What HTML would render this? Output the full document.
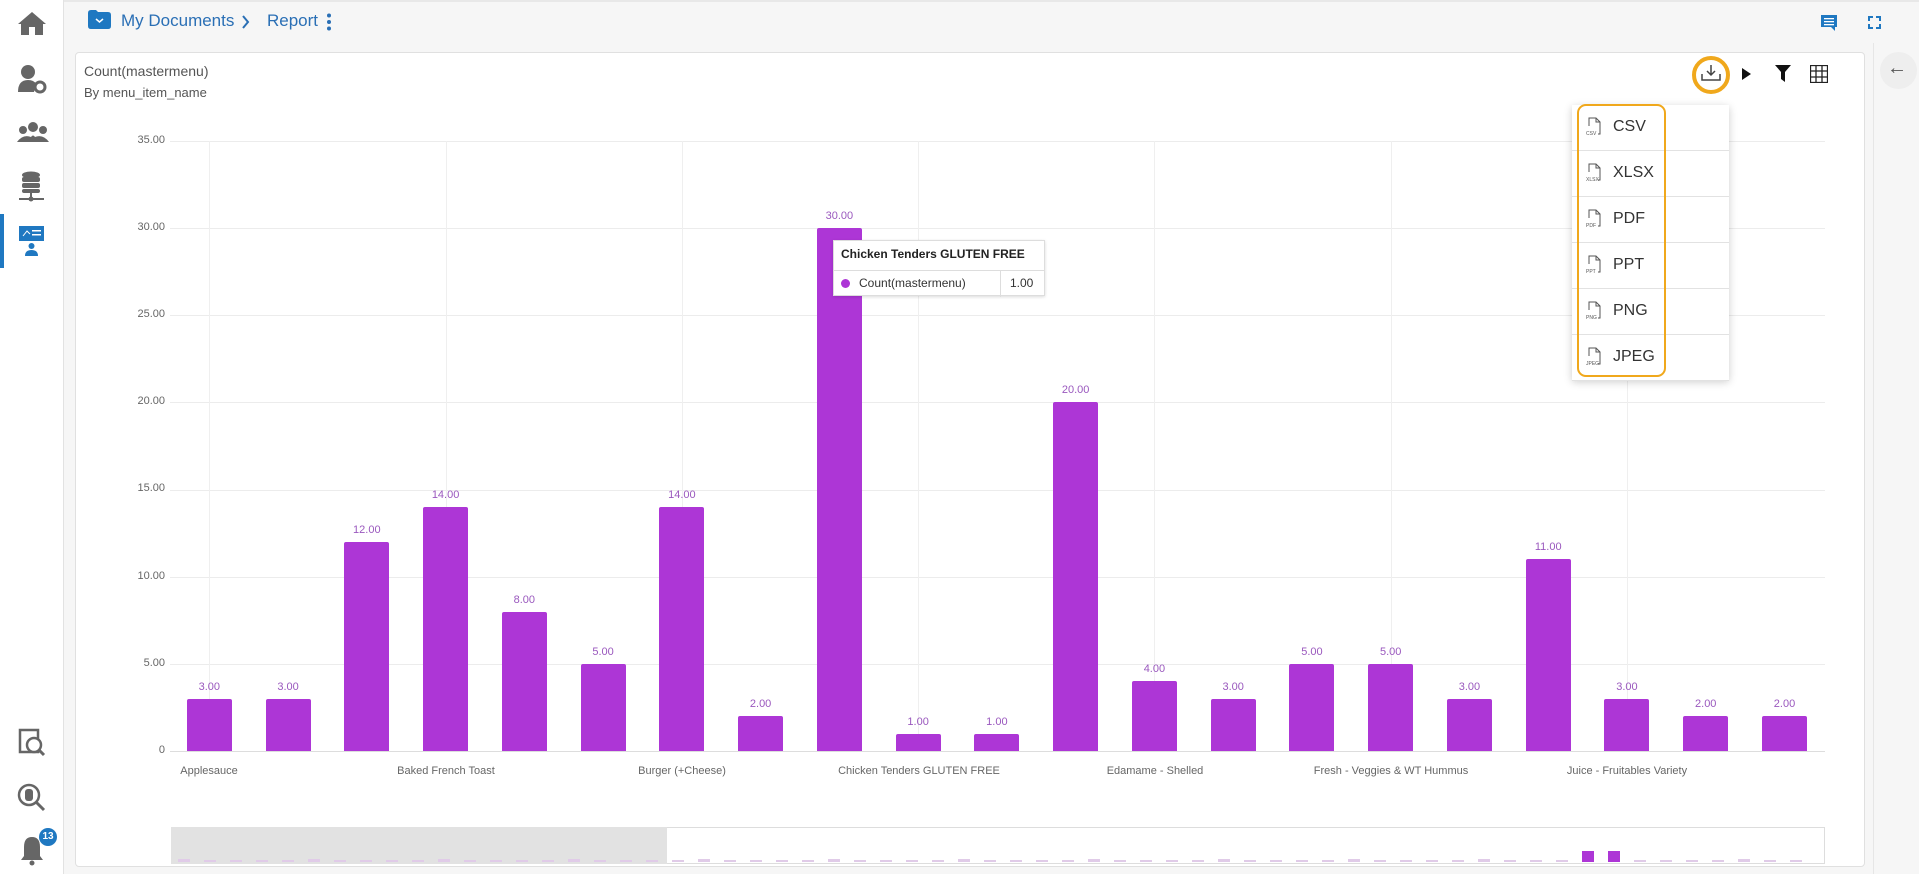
<!DOCTYPE html>
<html><head><meta charset="utf-8"><style>
*{margin:0;padding:0;box-sizing:border-box}
body{width:1919px;height:874px;overflow:hidden;background:#f6f6f6;font-family:"Liberation Sans",sans-serif;position:relative}
.abs{position:absolute}
#side{left:0;top:0;width:64px;height:874px;background:#fff;border-right:1px solid #e2e2e2}
#top{left:64px;top:0;right:0;height:43px;background:#f6f6f6;border-top:2px solid #e8e8e8}
#card{left:75px;top:52px;width:1790px;height:815px;background:#fff;border:1px solid #e0e0e0;border-radius:4px}
.yl{position:absolute;right:1754px;font-size:11px;color:#666;text-align:right;width:60px}
.g{position:absolute;left:170px;width:1655px;height:1px;background:#ececec}
.vg{position:absolute;top:141px;height:610px;width:1px;background:#efefef}
.bar{position:absolute;width:45px;background:#ad36d6;border-radius:2px 2px 0 0}
.bv{position:absolute;width:60px;text-align:center;font-size:11px;color:#9a58be}
.xl{position:absolute;top:765px;font-size:11px;color:#666;white-space:nowrap;transform:translateX(-50%)}
.dd{position:absolute;left:1572px;width:157px;height:46px;border-bottom:1px solid #e2e2e2;font-size:16px;color:#333}
.dd span{position:absolute;left:41px;top:13px}
.dd svg{position:absolute;left:14px;top:12px}
</style></head><body>
<div id="side" class="abs">
<svg class="abs" style="left:16px;top:10px" width="32" height="26" viewBox="0 0 32 26"><path d="M16 2 L2 14 L5 14 L5 25 L13 25 L13 17 L19 17 L19 25 L27 25 L27 14 L30 14 Z" fill="#666"/></svg>
<svg class="abs" style="left:17px;top:64px" width="32" height="30"><circle cx="11" cy="8" r="7" fill="#666"/><path d="M1 28 Q1 16 11 16 Q17 16 19 20 L17 28Z" fill="#666"/><circle cx="23" cy="23" r="5" fill="none" stroke="#666" stroke-width="3"/></svg>
<svg class="abs" style="left:16px;top:121px" width="34" height="24"><circle cx="17" cy="6" r="5" fill="#666"/><circle cx="7" cy="9" r="4" fill="#666"/><circle cx="27" cy="9" r="4" fill="#666"/><path d="M1 21 Q7 13 15 16 Q17 13 19 16 Q27 13 33 21 Z" fill="#666"/></svg>
<svg class="abs" style="left:18px;top:171px" width="28" height="32"><ellipse cx="13" cy="4" rx="9" ry="3.5" fill="#666"/><rect x="4" y="6" width="18" height="5" rx="2" fill="#666"/><rect x="4" y="12" width="18" height="5" rx="2" fill="#666"/><rect x="4" y="18" width="18" height="4" rx="2" fill="#666"/><rect x="12" y="22" width="2" height="6" fill="#666"/><rect x="1" y="27" width="25" height="2" fill="#666"/><circle cx="13" cy="28" r="2.5" fill="#666"/></svg>
<div class="abs" style="left:0;top:214px;width:4px;height:54px;background:#1f78c1"></div>
<svg class="abs" style="left:19px;top:225px" width="26" height="32"><rect x="0" y="1" width="25" height="15" fill="#1f78c1"/><path d="M4 11 L8 6 L11 9" stroke="#fff" fill="none"/><rect x="13" y="5" width="9" height="1.5" fill="#fff"/><rect x="13" y="9" width="9" height="1.5" fill="#fff"/><circle cx="12.5" cy="21" r="3" fill="#1f78c1"/><path d="M6 31 Q6 25 12.5 25 Q19 25 19 31Z" fill="#1f78c1"/></svg>
<svg class="abs" style="left:17px;top:728px" width="30" height="30"><rect x="3" y="2" width="18" height="22" fill="none" stroke="#666" stroke-width="2.5"/><circle cx="17" cy="17" r="7" fill="#fff" stroke="#666" stroke-width="2.5"/><path d="M22 22 L27 27" stroke="#666" stroke-width="3"/></svg>
<svg class="abs" style="left:17px;top:783px" width="30" height="30"><circle cx="12" cy="12" r="10" fill="none" stroke="#666" stroke-width="2.5"/><rect x="8" y="6" width="8" height="12" rx="3" fill="#666"/><path d="M19 19 L27 27" stroke="#666" stroke-width="3"/></svg>
<svg class="abs" style="left:17px;top:834px" width="30" height="32"><path d="M15 3 Q7 3 7 13 L7 22 L4 26 L26 26 L23 22 L23 13 Q23 3 15 3Z" fill="#666"/><circle cx="15" cy="29" r="2.5" fill="#666"/></svg>
<div class="abs" style="left:39px;top:828px;width:18px;height:18px;border-radius:9px;background:#1f78c1;color:#fff;font-size:10px;font-weight:bold;text-align:center;line-height:18px">13</div>
</div>
<div id="top" class="abs">
<svg class="abs" style="left:24px;top:8px" width="23" height="19"><path d="M0 3 Q0 0 3 0 L8 0 L10 2 L20 2 Q23 2 23 5 L23 16 Q23 19 20 19 L3 19 Q0 19 0 16Z" fill="#1f78c1"/><path d="M8 9 L11.5 12 L15 9" stroke="#fff" stroke-width="1.5" fill="none"/></svg>
<div class="abs" style="left:57px;top:9px;font-size:17px;color:#2a6fb5">My Documents</div>
<svg class="abs" style="left:178px;top:13px" width="8" height="14" fill="none" stroke="#2a6fb5" stroke-width="2"><path d="M1 1 L6 7 L1 13"/></svg>
<div class="abs" style="left:203px;top:9px;font-size:17px;color:#2a6fb5">Report</div>
<svg class="abs" style="left:262px;top:11px" width="6" height="18"><circle cx="3" cy="2.5" r="2" fill="#2a6fb5"/><circle cx="3" cy="9" r="2" fill="#2a6fb5"/><circle cx="3" cy="15.5" r="2" fill="#2a6fb5"/></svg>
<svg class="abs" style="left:1757px;top:13px" width="17" height="17"><path d="M0 0 H16 V12 H14 V16 L10 12 H0Z" fill="#1f78c1"/><rect x="3" y="3" width="10" height="1.3" fill="#fff"/><rect x="3" y="6" width="10" height="1.3" fill="#fff"/><rect x="3" y="9" width="10" height="1.3" fill="#fff"/></svg>
<svg class="abs" style="left:1804px;top:14px" width="13" height="13" fill="none" stroke="#1f78c1" stroke-width="2"><path d="M1 5 V1 H5 M8 1 H12 V5 M12 8 V12 H8 M5 12 H1 V8"/></svg>
</div>
<div class="abs" style="left:1873px;top:43px;width:1px;height:831px;background:#e6e6e6"></div>
<div class="abs" style="left:1880px;top:52px;width:37px;height:37px;border-radius:50%;background:#eee"></div>
<div class="abs" style="left:1887px;top:57px;font-size:20px;color:#555">←</div>
<div id="card" class="abs"></div>
<div class="abs" style="left:84px;top:63px;font-size:14px;color:#555">Count(mastermenu)</div>
<div class="abs" style="left:84px;top:85px;font-size:13px;color:#555">By menu_item_name</div>
<div class="yl" style="top:134px">35.00</div><div class="g" style="top:141px"></div>
<div class="yl" style="top:221px">30.00</div><div class="g" style="top:228px"></div>
<div class="yl" style="top:308px">25.00</div><div class="g" style="top:315px"></div>
<div class="yl" style="top:395px">20.00</div><div class="g" style="top:402px"></div>
<div class="yl" style="top:482px">15.00</div><div class="g" style="top:490px"></div>
<div class="yl" style="top:570px">10.00</div><div class="g" style="top:577px"></div>
<div class="yl" style="top:657px">5.00</div><div class="g" style="top:664px"></div>
<div class="yl" style="top:744px">0</div><div class="g" style="top:751px;background:#ddd"></div>
<div id="bars"></div>
<div class="xl" style="left:209px">Applesauce</div>
<div class="xl" style="left:446px">Baked French Toast</div>
<div class="xl" style="left:682px">Burger (+Cheese)</div>
<div class="xl" style="left:919px">Chicken Tenders GLUTEN FREE</div>
<div class="xl" style="left:1155px">Edamame - Shelled</div>
<div class="xl" style="left:1391px">Fresh - Veggies &amp; WT Hummus</div>
<div class="xl" style="left:1627px">Juice - Fruitables Variety</div>
<div class="abs" style="left:833px;top:240px;width:212px;height:56px;background:#fff;border:1px solid #ddd;box-shadow:0 1px 3px rgba(0,0,0,.15)">
<div style="position:absolute;left:7px;top:6px;font-size:12px;font-weight:bold;color:#222">Chicken Tenders GLUTEN FREE</div>
<div style="position:absolute;left:0;right:0;top:29px;height:1px;background:#ddd"></div>
<div style="position:absolute;left:166px;top:29px;width:1px;height:27px;background:#ddd"></div>
<div style="position:absolute;left:7px;top:38px;width:9px;height:9px;border-radius:50%;background:#ad36d6"></div>
<div style="position:absolute;left:25px;top:35px;font-size:12px;color:#333">Count(mastermenu)</div>
<div style="position:absolute;left:176px;top:35px;font-size:12px;color:#333">1.00</div>
</div>
<div class="abs" style="left:171px;top:827px;width:1654px;height:37px;border:1px solid #ddd;background:#fff"></div>
<div class="abs" style="left:171px;top:827px;width:496px;height:37px;background:#e2e2e2"></div>
<div id="mini"></div>
<div class="abs" style="left:1692px;top:56px;width:38px;height:38px;border:4px solid #f0a81c;border-radius:50%;background:#fff"></div>
<svg class="abs" style="left:1701px;top:64px" width="20" height="18" fill="none" stroke="#444" stroke-width="1.5"><path d="M10 1 V11 M6 7 L10 11 L14 7 M1 10 V16 H19 V10"/></svg>
<svg class="abs" style="left:1742px;top:68px" width="10" height="12"><path d="M0 0 L9 6 L0 12Z" fill="#111"/></svg>
<svg class="abs" style="left:1775px;top:65px" width="16" height="17"><path d="M0 0 H16 L10 7 V17 L6 14 V7Z" fill="#111"/></svg>
<svg class="abs" style="left:1810px;top:65px" width="18" height="18" fill="none" stroke="#222" stroke-width="1.3"><rect x=".5" y=".5" width="17" height="17"/><path d="M6 0V18M12 0V18M0 6H18M0 12H18"/></svg>
<div class="abs" style="left:1572px;top:105px;width:157px;height:275px;background:#fff;box-shadow:0 2px 8px rgba(0,0,0,.2)"></div>
<div id="dd"></div>
<div class="abs" style="left:1577px;top:104px;width:89px;height:273px;border:2px solid #f0a81c;border-radius:9px"></div>
<script>
var v=[3,3,12,14,8,5,14,2,30,1,1,20,4,3,5,5,3,11,3,2,2],h='',m='';
for(var i=0;i<21;i++){var c=209.3+i*78.76,t=751-v[i]*17.43;
if(i%3==0)h+='<div class="vg" style="left:'+Math.round(c)+'px"></div>';
h+='<div class="bar" style="left:'+(c-22.5)+'px;top:'+t+'px;height:'+(751-t)+'px"></div>';
h+='<div class="bv" style="left:'+(c-30)+'px;top:'+(t-18)+'px">'+v[i].toFixed(2)+'</div>';}
document.getElementById('bars').innerHTML=h;
for(var j=0;j<63;j++){var x=178+j*26,hh=(j==54||j==55)?11:(j%5==0?3:2);
m+='<div class="abs" style="left:'+x+'px;top:'+(862-hh)+'px;width:12px;height:'+hh+'px;background:'+(hh>3?'#ad36d6':'#e0cbe8')+'"></div>';}
document.getElementById('mini').innerHTML=m;
var f=['CSV','XLSX','PDF','PPT','PNG','JPEG'],d='';
for(var k=0;k<6;k++)d+='<div class="dd" style="top:'+(105+k*46)+'px"><svg width="16" height="20" fill="none" stroke="#555" stroke-width="1"><path d="M3 9V1H10L14 5V17H12M10 1V5H14"/><text x="0" y="18" font-size="5" fill="#555" stroke="none" font-family="Liberation Sans">'+f[k].slice(0,4)+'</text></svg><span>'+f[k]+'</span></div>';
document.getElementById('dd').innerHTML=d;
</script>
</body></html>
